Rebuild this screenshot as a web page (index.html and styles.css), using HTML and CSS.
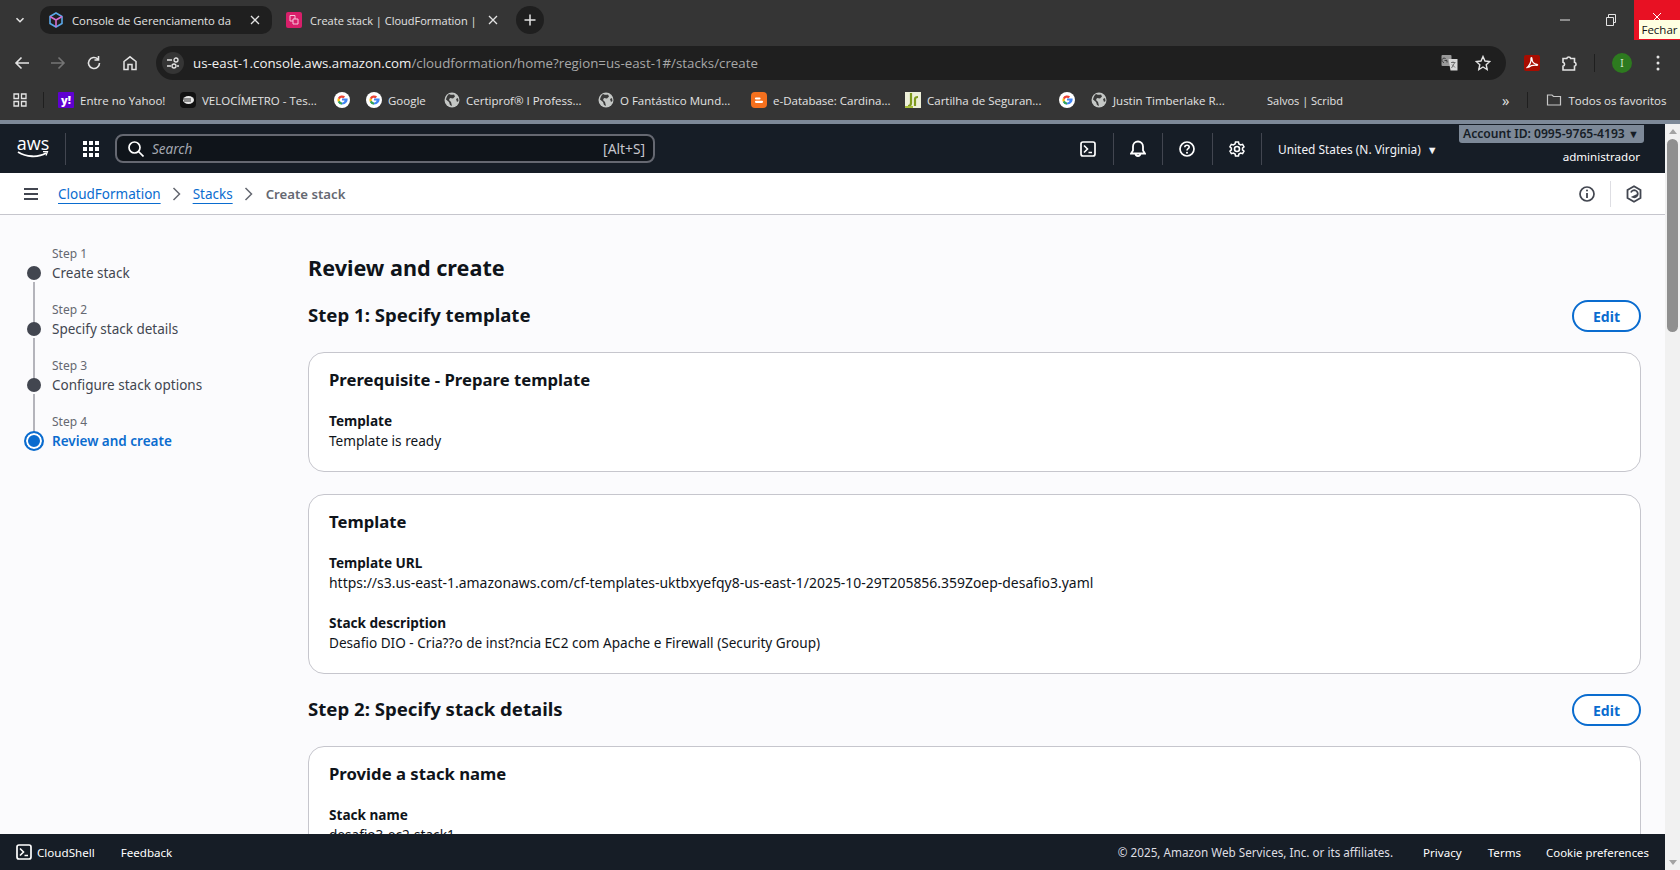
FILE: index.html
```html
<!DOCTYPE html>
<html lang="en">
<head>
  <meta charset="UTF-8">
  <title>Create stack | CloudFormation</title>
  <link rel="stylesheet" href="styles.css">
</head>
<body>
  <div class="tabstrip">
    <svg class="tab-list" width="12" height="12" viewBox="0 0 12 12"><path d="M2.500 4.200 6 7.700l3.500-3.500" fill="none" stroke="#e3e3e3" stroke-width="1.600"/></svg>
    <div class="tab tab-active">
      <svg width="16" height="16" viewBox="0 0 16 16"><path d="M8 1 14 4.500v7L8 15 2 11.500v-7z" fill="none" stroke="#5aa7e8" stroke-width="1.600"/><path d="M2 4.500 8 8l6-3.500M8 8v7" fill="none" stroke="#d56fd0" stroke-width="1.600"/></svg>
      <span class="tab-title">Console de Gerenciamento da</span>
      <svg class="tab-close" width="10" height="10" viewBox="0 0 10 10"><path d="M1 1l8 8M9 1 1 9" stroke="#e3e3e3" stroke-width="1.300"/></svg>
    </div>
    <div class="tab tab-second">
      <svg width="16" height="16" viewBox="0 0 16 16"><rect width="16" height="16" rx="2" fill="#d81f6a"/><path d="M4 3.500h5v3.500H7v2H4zM9 7h3v5H7V9" fill="none" stroke="#f6c6da" stroke-width="1"/></svg>
      <span class="tab-title">Create stack | CloudFormation |</span>
      <svg class="tab-close" width="10" height="10" viewBox="0 0 10 10"><path d="M1 1l8 8M9 1 1 9" stroke="#e3e3e3" stroke-width="1.300"/></svg>
    </div>
    <div class="new-tab"><svg width="12" height="12" viewBox="0 0 12 12"><path d="M6 .5v11M.5 6h11" stroke="#e3e3e3" stroke-width="1.500"/></svg></div>
    <div class="window-controls">
      <svg class="win-min" width="10" height="10" viewBox="0 0 10 10"><path d="M0 5h10" stroke="#e3e3e3"/></svg>
      <svg class="win-restore" width="12" height="12" viewBox="0 0 12 12"><path d="M1.500 3.500h7v8h-7zM3.500 3.500v-3h7v8h-2" fill="none" stroke="#e3e3e3"/></svg>
      <div class="close-btn"><svg width="10" height="10" viewBox="0 0 10 10"><path d="M1 1l8 8M9 1 1 9" stroke="#fff"/></svg></div>
    </div>
    <div class="tooltip">Fechar</div>
  </div>

  <div class="toolbar">
    <svg class="nav-icon" width="16" height="16" viewBox="0 0 16 16"><path d="M15 8H2M7.500 2.500 2 8l5.500 5.500" fill="none" stroke="#e3e3e3" stroke-width="1.600"/></svg>
    <svg class="nav-icon" width="16" height="16" viewBox="0 0 16 16"><path d="M1 8h13M8.500 2.500 14 8l-5.500 5.500" fill="none" stroke="#757575" stroke-width="1.600"/></svg>
    <svg class="nav-icon" width="16" height="16" viewBox="0 0 16 16"><path d="M13.500 8A5.500 5.500 0 1 1 11.800 4M12.500 1v4h-4" fill="none" stroke="#e3e3e3" stroke-width="1.600"/></svg>
    <svg class="nav-icon" width="16" height="16" viewBox="0 0 16 16"><path d="M2 14.500V6.500L8 1.800l6 4.700v8h-4V9.500H6v5z" fill="none" stroke="#e3e3e3" stroke-width="1.500"/></svg>
    <div class="omnibox">
      <div class="site-info"><svg width="14" height="14" viewBox="0 0 14 14"><path d="M1 4h5M11 10h2M1 10h4" stroke="#e3e3e3" stroke-width="1.300"/><circle cx="10" cy="4" r="2" fill="none" stroke="#e3e3e3" stroke-width="1.300"/><circle cx="8" cy="10" r="2" fill="none" stroke="#e3e3e3" stroke-width="1.300"/></svg></div>
      <div class="url"><span class="url-host">us-east-1.console.aws.amazon.com</span>/cloudformation/home?region=us-east-1#/stacks/create</div>
      <svg width="18" height="18" viewBox="0 0 18 18"><rect x="0.500" y="1" width="10" height="11" rx="1" fill="#9a9a9a"/><path d="M7.500 5h9v11.500h-7z" fill="#d8d8d8"/><path d="M3 8.500a2.200 2.200 0 1 1 2-3.300M3.500 6.500h2.500v2" fill="none" stroke="#333" stroke-width=".9"/><path d="M10 8.500h4.500M12 7.500v1M10.500 14l3-5M11 10.500l3 3" stroke="#555" fill="none" stroke-width=".8"/></svg>
      <svg class="star" width="16" height="16" viewBox="0 0 16 16"><path d="M8 1.500 10 6l4.800.5-3.600 3.200 1 4.800L8 12l-4.200 2.500 1-4.800L1.200 6.500 6 6z" fill="none" stroke="#e3e3e3" stroke-width="1.400"/></svg>
    </div>
    <div class="ext-pdf"><svg width="14" height="14" viewBox="0 0 14 14"><path d="M1.500 12C4.500 10 6.500 5.500 6 2.500c-.2-1 .8-1 .9 0C7 5.500 9 8 12 8.500c1 .2.700.9-.3.800-3-.3-6 .2-8.500 2.200" fill="none" stroke="#fff" stroke-width="1.300"/></svg></div>
    <svg class="ext-puzzle" width="18" height="18" viewBox="0 0 18 18"><path d="M2 4.500h3.800a2 2 0 0 1 3.900 0h3.800v3.800a2 2 0 0 1 0 3.900v3.800H2v-3.800a2 2 0 0 0 0-3.900z" fill="none" stroke="#e3e3e3" stroke-width="1.600"/></svg>
    <div class="tool-sep"></div>
    <div class="avatar">I</div>
    <svg class="menu-dots" width="4" height="16" viewBox="0 0 4 16"><circle cx="2" cy="2" r="1.500" fill="#e3e3e3"/><circle cx="2" cy="8" r="1.500" fill="#e3e3e3"/><circle cx="2" cy="14" r="1.500" fill="#e3e3e3"/></svg>
  </div>

  <div class="bookmarks">
    <svg class="apps" width="14" height="14" viewBox="0 0 14 14"><path d="M1 1h4.500v4.500H1zM8.500 1H13v4.500H8.500zM1 8.500h4.500V13H1zM8.500 8.500H13V13H8.500z" fill="none" stroke="#e3e3e3" stroke-width="1.300"/></svg>
    <div class="bm-sep"></div>
    <div class="bm bm-yahoo"><span class="fav fav-yahoo">y!</span>Entre no Yahoo!</div>
    <div class="bm bm-velo"><svg class="fav-svg" viewBox="0 0 16 16"><rect width="16" height="16" rx="4" fill="#111"/><ellipse cx="8.500" cy="8" rx="5.500" ry="4" fill="#e8e8e8"/><path d="M3 7h8M4 9h7" stroke="#333"/></svg>VELOCÍMETRO - Tes...</div>
    <div class="bm bm-g1"><svg class="fav-svg" viewBox="0 0 16 16"><use href="#g-logo"/></svg></div>
    <div class="bm bm-google"><svg class="fav-svg" viewBox="0 0 16 16"><use href="#g-logo"/></svg>Google</div>
    <div class="bm bm-cert"><svg class="fav-svg" viewBox="0 0 16 16"><use href="#globe"/></svg>Certiprof® I Profess...</div>
    <div class="bm bm-fant"><svg class="fav-svg" viewBox="0 0 16 16"><use href="#globe"/></svg>O Fantástico Mund...</div>
    <div class="bm bm-blog"><svg class="fav-svg" viewBox="0 0 16 16"><rect width="16" height="16" rx="4" fill="#f4701e"/><path d="M5 6.500h3.500M5 9.800h6" stroke="#fff" stroke-width="2.200" stroke-linecap="round"/></svg>e-Database: Cardina...</div>
    <div class="bm bm-cart"><svg class="fav-svg" viewBox="0 0 16 16"><rect width="16" height="16" fill="#eef0d8"/><path d="M6 1v10c0 2-1 3-3 3M10 14V7c0-1 1-2 3-2" fill="none" stroke="#7f9a1e" stroke-width="2.200"/><path d="M0 15h8" stroke="#a8bd3a" stroke-width="2"/></svg>Cartilha de Seguran...</div>
    <div class="bm bm-g2"><svg class="fav-svg" viewBox="0 0 16 16"><use href="#g-logo"/></svg></div>
    <div class="bm bm-just"><svg class="fav-svg" viewBox="0 0 16 16"><use href="#globe"/></svg>Justin Timberlake R...</div>
    <div class="bm bm-salvos">Salvos | Scribd</div>
    <div class="bm-more">»</div>
    <div class="bm-sep bm-sep-right"></div>
    <div class="bm bm-all"><svg class="fav-svg" viewBox="0 0 16 16"><path d="M1.500 3h4.500l1.500 1.500h7V13h-13z" fill="none" stroke="#c7c7c7" stroke-width="1.200"/></svg>Todos os favoritos</div>
  </div>
  <div class="chrome-edge"></div>

  <svg class="defs" width="0" height="0">
    <defs>
      <g id="g-logo">
        <circle cx="8" cy="8" r="8" fill="#fff"/>
        <path d="M8 6.600h5.600c.3 2.900-1.500 6-5.600 6a4.600 4.600 0 0 1-4.100-2.500l1.900-1.300c.4 1 1.200 1.800 2.200 1.800 1.200 0 2.300-.6 2.600-2H8z" fill="#4285f4"/>
        <path d="M3.900 10.100a4.600 4.600 0 0 1 0-4.200l1.900 1.300a2.400 2.400 0 0 0 0 1.600z" fill="#fbbc05"/>
        <path d="M3.900 5.900A4.600 4.600 0 0 1 11.100 4.600L9.500 6.200A2.400 2.400 0 0 0 5.800 7.200z" fill="#ea4335"/>
        <path d="M3.900 10.100 5.800 8.800c.4 1 1.200 1.800 2.200 1.800v2a4.600 4.600 0 0 1-4.100-2.500z" fill="#34a853"/>
      </g>
      <g id="globe">
        <circle cx="8" cy="8" r="7.500" fill="#c4c7c5"/>
        <path d="M5 2c2 1 4 1 5 .5l1 2-2 2-3-.5-1 2 2 2 1 4-2-1-1-3-3-2.500C2.500 5 3.500 3 5 2zM14 6l-2 1 1 3 1.500-1z" fill="#3a3a3a"/>
      </g>
    </defs>
  </svg>

  <div class="viewport">
    <div class="console">
      <header class="top-nav">
        <div class="aws-logo">
          <span class="aws-text">aws</span>
          <svg width="32" height="8" viewBox="0 0 32 8"><path d="M1 1c8 5 20 6 28 1" fill="none" stroke="#fff" stroke-width="1.800"/><path d="M26 .5h4.500L29 4.500" fill="none" stroke="#fff" stroke-width="1.300"/></svg>
        </div>
        <div class="nav-sep-logo"></div>
        <svg class="services" width="16" height="16" viewBox="0 0 16 16" fill="#fff"><rect width="4" height="4"/><rect x="6" width="4" height="4"/><rect x="12" width="4" height="4"/><rect y="6" width="4" height="4"/><rect x="6" y="6" width="4" height="4"/><rect x="12" y="6" width="4" height="4"/><rect y="12" width="4" height="4"/><rect x="6" y="12" width="4" height="4"/><rect x="12" y="12" width="4" height="4"/></svg>
        <div class="search">
          <svg width="16" height="16" viewBox="0 0 16 16"><circle cx="6.500" cy="6.500" r="5.500" fill="none" stroke="#fff" stroke-width="1.700"/><path d="m10.500 10.500 5 5" stroke="#fff" stroke-width="1.700"/></svg>
          <span class="search-hint">Search</span>
          <span class="search-key">[Alt+S]</span>
        </div>
        <div class="nav-icons">
          <div class="nav-btn"><svg width="16" height="16" viewBox="0 0 16 16"><use href="#shell"/></svg></div>
          <div class="nav-btn"><svg width="16" height="18" viewBox="0 0 16 18"><path d="M1 13.500h14l-2-3V6.500a5 5 0 0 0-10 0v4zM5.500 13.500a2.500 2.500 0 0 0 5 0" fill="none" stroke="#fff" stroke-width="1.800"/></svg></div>
          <div class="nav-btn"><svg width="16" height="16" viewBox="0 0 16 16"><circle cx="8" cy="8" r="7" fill="none" stroke="#fff" stroke-width="1.700"/><path d="M5.800 6.200C5.800 4.900 6.800 4.200 8 4.200s2.200.8 2.200 1.900C10.200 7.700 8 7.700 8 9.500" fill="none" stroke="#fff" stroke-width="1.600"/><circle cx="8" cy="11.800" r="1" fill="#fff"/></svg></div>
          <div class="nav-btn"><svg width="16" height="16" viewBox="0 0 16 16"><circle cx="8" cy="8" r="2.500" fill="none" stroke="#fff" stroke-width="1.600"/><path d="M6.500 1h3l.4 2 1.700 1 2-.7 1.400 2.600-1.500 1.300v1.600l1.500 1.300-1.400 2.600-2-.7-1.700 1-.4 2h-3l-.4-2-1.700-1-2 .7L.9 10.100l1.500-1.300V7.200L.9 5.900l1.400-2.600 2 .7 1.700-1z" fill="none" stroke="#fff" stroke-width="1.500"/></svg></div>
        </div>
        <div class="region">United States (N. Virginia)<span class="caret">▼</span></div>
        <div class="account">
          <div class="account-badge">Account ID: 0995-9765-4193 <span class="caret-sm">▼</span></div>
          <div class="account-user">administrador</div>
        </div>
      </header>

      <div class="breadcrumbs">
        <svg class="hamburger" width="16" height="14" viewBox="0 0 16 14"><path d="M1 2h14M1 7h14M1 12h14" stroke="#424650" stroke-width="2"/></svg>
        <a class="crumb-link">CloudFormation</a>
        <svg class="crumb-arrow" width="10" height="14" viewBox="0 0 10 14"><path d="m1.500 1 6 6-6 6" fill="none" stroke="#656871" stroke-width="1.500"/></svg>
        <a class="crumb-link">Stacks</a>
        <svg class="crumb-arrow" width="10" height="14" viewBox="0 0 10 14"><path d="m1.500 1 6 6-6 6" fill="none" stroke="#656871" stroke-width="1.500"/></svg>
        <span class="crumb-current">Create stack</span>
        <div class="crumb-tools">
          <svg width="16" height="16" viewBox="0 0 16 16"><circle cx="8" cy="8" r="7" fill="none" stroke="#424650" stroke-width="1.700"/><path d="M8 7v5" stroke="#424650" stroke-width="1.800"/><circle cx="8" cy="4.500" r="1" fill="#424650"/></svg>
          <div class="tools-sep"></div>
          <svg width="16" height="18" viewBox="0 0 16 18"><path d="M8 1.200 14.500 5v8L8 16.800 1.500 13V5z" fill="none" stroke="#424650" stroke-width="1.800"/><path d="M5 7.500A3.500 3.500 0 1 1 7 12l4-2" fill="none" stroke="#424650" stroke-width="1.800"/></svg>
        </div>
      </div>

      <div class="page">
        <nav class="steps">
          <div class="step">
            <div class="step-label">Step 1</div>
            <div class="step-row"><span class="step-dot"></span><span class="step-name">Create stack</span></div>
          </div>
          <div class="step">
            <div class="step-label">Step 2</div>
            <div class="step-row"><span class="step-dot"></span><span class="step-name">Specify stack details</span></div>
          </div>
          <div class="step">
            <div class="step-label">Step 3</div>
            <div class="step-row"><span class="step-dot"></span><span class="step-name">Configure stack options</span></div>
          </div>
          <div class="step step-current">
            <div class="step-label">Step 4</div>
            <div class="step-row"><span class="step-dot"></span><span class="step-name">Review and create</span></div>
          </div>
        </nav>

        <main class="content">
          <h1 class="page-title">Review and create</h1>

          <div class="section-head">
            <h2>Step 1: Specify template</h2>
            <button class="edit-btn">Edit</button>
          </div>
          <section class="card">
            <h3>Prerequisite - Prepare template</h3>
            <div class="field">
              <div class="field-label">Template</div>
              <div class="field-value">Template is ready</div>
            </div>
          </section>
          <section class="card">
            <h3>Template</h3>
            <div class="field">
              <div class="field-label">Template URL</div>
              <div class="field-value field-url">https://s3.us-east-1.amazonaws.com/cf-templates-uktbxyefqy8-us-east-1/2025-10-29T205856.359Zoep-desafio3.yaml</div>
            </div>
            <div class="field">
              <div class="field-label">Stack description</div>
              <div class="field-value">Desafio DIO - Cria??o de inst?ncia EC2 com Apache e Firewall (Security Group)</div>
            </div>
          </section>

          <div class="section-head">
            <h2>Step 2: Specify stack details</h2>
            <button class="edit-btn">Edit</button>
          </div>
          <section class="card">
            <h3>Provide a stack name</h3>
            <div class="field">
              <div class="field-label">Stack name</div>
              <div class="field-value">desafio3-ec2-stack1</div>
            </div>
          </section>
        </main>
      </div>

      <footer class="bottom-bar">
        <svg width="16" height="16" viewBox="0 0 16 16"><use href="#shell"/></svg>
        <span class="cloudshell">CloudShell</span>
        <span class="feedback">Feedback</span>
        <span class="copyright">© 2025, Amazon Web Services, Inc. or its affiliates.</span>
        <span class="foot-link">Privacy</span>
        <span class="foot-link">Terms</span>
        <span class="foot-link foot-cookie">Cookie preferences</span>
      </footer>
    </div>
    <div class="scrollbar">
      <div class="scroll-up"></div>
      <div class="scroll-thumb"></div>
      <div class="scroll-track"></div>
      <div class="scroll-down"></div>
    </div>
  </div>

  <svg class="defs" width="0" height="0">
    <defs>
      <g id="shell">
        <rect x="1" y="1" width="14" height="14" rx="2" fill="none" stroke="#fff" stroke-width="1.700"/>
        <path d="m4 4.500 3.500 3.500L4 11.500M8.500 11.500H12" fill="none" stroke="#fff" stroke-width="1.600"/>
      </g>
    </defs>
  </svg>
</body>
</html>
```

FILE: styles.css
```css
* {
  box-sizing: border-box;
}

body {
  margin: 0;
  width: 1680px;
  height: 870px;
  overflow: hidden;
  display: flex;
  flex-direction: column;
  background: #353535;
  font-family: "Noto Sans", sans-serif;
  font-size: 14px;
  color: #0f141a;
}

.defs {
  position: absolute;
}

/* browser chrome */
.tabstrip {
  height: 40px;
  flex: none;
  display: flex;
  align-items: flex-start;
  padding-top: 6px;
  position: relative;
  color: #e3e3e3;
  font-size: 11.300px;
  font-family: "Open Sans", sans-serif;
}

.tab-list {
  margin: 8px 14px 0 14px;
}

.tab {
  height: 28px;
  width: 232px;
  flex: none;
  display: flex;
  align-items: center;
  padding: 0 10px 0 8px;
  border-radius: 10px;
  gap: 8px;
}

.tab-active {
  background: #1f1f1f;
  margin-right: 6px;
}

.tab-second {
  font-size: 11px;
}

.tab-title {
  flex: 1;
  white-space: nowrap;
  overflow: hidden;
  min-width: 0;
}

.tab-close {
  margin: 0 2px 0 2px;
}

.new-tab {
  width: 28px;
  height: 28px;
  margin-left: 6px;
  border-radius: 50%;
  background: #1f1f1f;
  display: flex;
  align-items: center;
  justify-content: center;
}

.window-controls {
  margin-left: auto;
  display: flex;
  align-items: center;
  height: 40px;
  margin-top: -6px;
}

.win-restore {
  margin-left: 35px;
  margin-right: 17px;
}

.close-btn {
  width: 46px;
  height: 40px;
  background: #e81123;
  display: flex;
  justify-content: center;
  padding-top: 12px;
}

.tooltip {
  position: absolute;
  right: 0;
  top: 20px;
  width: 41px;
  height: 19px;
  background: #ffffe1;
  color: #111;
  font-size: 11.500px;
  line-height: 19px;
  text-align: center;
  white-space: nowrap;
}

.toolbar {
  height: 44px;
  flex: none;
  display: flex;
  align-items: center;
  padding: 2px 14px 0 14px;
}

.nav-icon {
  margin-right: 20px;
}

.nav-icon:nth-child(4) {
  margin-right: 18px;
}

.omnibox {
  width: 1350px;
  height: 34px;
  background: #1f1f1f;
  border-radius: 17px;
  display: flex;
  align-items: center;
  padding: 0 15px 0 6px;
  color: #a8a8a8;
}

.site-info {
  width: 22px;
  height: 22px;
  border-radius: 50%;
  background: #353535;
  display: flex;
  align-items: center;
  justify-content: center;
  margin-right: 9px;
}

.url {
  flex: 1;
  font-family: "Open Sans", sans-serif;
  font-size: 13.300px;
}

.url-host {
  color: #f1f1f1;
}

.star {
  margin-left: 16px;
}

.ext-pdf {
  width: 16px;
  height: 16px;
  margin-left: 18px;
  background: #a80c00;
  border-radius: 2px;
  display: flex;
  align-items: center;
  justify-content: center;
}

.ext-puzzle {
  margin-left: 21px;
}

.tool-sep {
  width: 1px;
  height: 18px;
  background: #1f1f1f;
  margin-left: 15px;
}

.avatar {
  width: 20px;
  height: 20px;
  margin-left: 17px;
  border-radius: 50%;
  background: #2d7a1f;
  color: #d5e8cf;
  font-size: 10px;
  text-align: center;
  line-height: 20px;
}

.menu-dots {
  margin-left: 24px;
}

.bookmarks {
  height: 36px;
  flex: none;
  display: flex;
  align-items: center;
  padding: 0 0 4px 13px;
  font-family: "Open Sans", sans-serif;
  font-size: 11.500px;
  color: #e3e3e3;
  white-space: nowrap;
}

.bm-sep {
  width: 1px;
  height: 16px;
  background: #1f1f1f;
  margin: 0 14px 0 16px;
}

.bm {
  display: flex;
  align-items: center;
  gap: 6px;
  flex: none;
}

.bm-yahoo { width: 122px; }
.bm-velo { width: 154px; }
.bm-g1 { width: 32px; }
.bm-google { width: 78px; }
.bm-cert { width: 154px; }
.bm-fant { width: 153px; }
.bm-blog { width: 154px; }
.bm-cart { width: 154px; }
.bm-g2 { width: 32px; }
.bm-just { width: 176px; }
.bm-salvos { width: 235px; font-size: 11px; }
.bm-more { font-size: 15px; }

.bm-sep-right {
  margin: 0 18px 0 18px;
}

.fav,
.fav-svg {
  width: 16px;
  height: 16px;
  flex: none;
  display: block;
}

.fav {
  border-radius: 1px;
  text-align: center;
  font-weight: 800;
  line-height: 15px;
  font-size: 11px;
  color: #fff;
}

.fav-yahoo { background: #5f01d1; }

.chrome-edge {
  height: 4px;
  flex: none;
  background: #7d8998;
}

.viewport {
  flex: 1;
  min-height: 0;
  display: flex;
}

.console {
  flex: 1;
  min-width: 0;
  display: flex;
  flex-direction: column;
  background: #fbfbfd;
}

/* aws top nav */
.top-nav {
  height: 49px;
  flex: none;
  display: flex;
  align-items: center;
  position: relative;
  padding-left: 17px;
  background: #161d26;
  color: #fff;
}

.aws-logo {
  width: 32px;
  display: flex;
  flex-direction: column;
  align-items: center;
}

.aws-text {
  font-family: "Open Sans", sans-serif;
  font-size: 18px;
  line-height: 16px;
  margin-top: -3px;
}

.nav-sep-logo {
  width: 1px;
  height: 32px;
  background: #424650;
  margin: 0 17px 0 16px;
}

.search {
  width: 540px;
  height: 29px;
  margin-left: 16px;
  display: flex;
  align-items: center;
  gap: 8px;
  padding: 0 8px 0 11px;
  background: #0f141a;
  border: 2px solid #656871;
  border-radius: 8px;
}

.search-hint {
  font-style: italic;
  font-size: 13.500px;
  color: #a3a7b0;
}

.search-key {
  margin-left: auto;
  color: #c6c6cd;
  font-size: 13.800px;
}

.nav-icons {
  display: flex;
  margin-left: 409px;
}

.nav-btn {
  width: 49.500px;
  height: 32px;
  display: flex;
  align-items: center;
  justify-content: center;
  border-right: 1px solid #424650;
}

.region {
  margin-left: 16px;
  font-size: 11.900px;
  color: #f3f3f7;
}

.caret {
  font-size: 11px;
  margin-left: 6px;
}

.account {
  position: absolute;
  right: 21px;
  top: 1px;
  display: flex;
  flex-direction: column;
  align-items: flex-end;
}

.account-badge {
  width: 185px;
  height: 18px;
  background: #7d8998;
  color: #161d26;
  font-weight: 600;
  font-size: 12.100px;
  line-height: 18px;
  padding-left: 4px;
  border-radius: 0 0 3px 3px;
  white-space: nowrap;
}

.caret-sm {
  font-size: 11px;
}

.account-user {
  margin: 6px 4px 0 0;
  font-size: 11.600px;
}

/* breadcrumbs */
.breadcrumbs {
  height: 42px;
  flex: none;
  display: flex;
  align-items: center;
  padding-left: 23px;
  background: #fff;
  border-bottom: 1px solid #c6c6cd;
  font-size: 13.500px;
}

.hamburger {
  margin-right: 19px;
}

.crumb-link {
  color: #0a6ccf;
  text-decoration: underline;
  text-underline-offset: 4px;
}

.crumb-arrow {
  margin: 0 11px;
}

.crumb-arrow:nth-of-type(3) {
  margin-right: 12px;
}

.crumb-current {
  font-weight: 600;
  font-size: 13.200px;
  color: #656871;
}

.crumb-tools {
  margin-left: auto;
  display: flex;
  align-items: center;
  padding-right: 23px;
}

.tools-sep {
  width: 1px;
  height: 26px;
  background: #dedee3;
  margin: 0 15px;
}

/* wizard */
.page {
  flex: 1;
  min-height: 0;
  overflow: hidden;
  display: flex;
}

.steps {
  width: 308px;
  flex: none;
  padding: 30px 0 0 24px;
}

.step {
  height: 56px;
  position: relative;
}

.step-label {
  padding-left: 28px;
  font-size: 12px;
  line-height: 17px;
  margin-bottom: 1px;
  color: #656871;
}

.step-row {
  display: flex;
  align-items: center;
  height: 20px;
  font-size: 13.500px;
}

.step-dot {
  width: 14px;
  height: 14px;
  margin: 0 11px 0 3px;
  border-radius: 50%;
  background: #424650;
  flex: none;
}

.step-name {
  color: #424650;
}

.step:not(:last-child)::after {
  content: "";
  position: absolute;
  left: 9px;
  top: 37px;
  width: 1.500px;
  height: 42px;
  background: #b4b4bb;
}

.step-current .step-name {
  color: #0a6ccf;
  font-weight: 600;
}

.step-current .step-dot {
  width: 20px;
  height: 20px;
  margin: 0 8px 0 0;
  background: #0a6ccf;
  border: 2px solid #0a6ccf;
  box-shadow: inset 0 0 0 2px #fff;
}

.content {
  flex: 1;
  min-width: 0;
  padding: 38px 24px 0 0;
}

.page-title {
  margin: 0 0 17px;
  font-size: 21.600px;
  line-height: 30px;
  font-weight: 700;
}

.section-head {
  display: flex;
  align-items: center;
  justify-content: space-between;
  height: 32px;
  margin-bottom: 20px;
}

.section-head h2 {
  margin: 0;
  padding-bottom: 2px;
  font-size: 18.600px;
  line-height: 24px;
  font-weight: 700;
}

.edit-btn {
  width: 69px;
  height: 32px;
  background: #fff;
  border: 2px solid #0a6ccf;
  border-radius: 16px;
  color: #0a6ccf;
  font: 700 14px "Noto Sans", sans-serif;
}

.card {
  margin-bottom: 20px;
  padding: 16px 20px 20px;
  background: #fff;
  border: 1px solid #c6c6cd;
  border-radius: 16px;
}

.card + .card {
  margin-top: 22px;
}

.card h3 {
  margin: 0 0 20px;
  font-size: 16.700px;
  line-height: 22px;
  font-weight: 700;
}

.field {
  line-height: 20px;
  margin-top: 20px;
  font-size: 13.600px;
}

.card h3 + .field {
  margin-top: 0;
}

.field-label {
  font-weight: 700;
}

.field-url {
  font-size: 13.950px;
}

/* footer */
.bottom-bar {
  height: 36px;
  flex: none;
  display: flex;
  align-items: center;
  padding: 0 16px;
  position: relative;
  background: #161d26;
  color: #fff;
  font-size: 11.600px;
}

.cloudshell {
  margin-left: 5px;
}

.feedback {
  margin-left: 26px;
}

.copyright {
  margin-left: auto;
  margin-right: 4px;
  font-size: 11.700px;
  color: #dedee3;
}

.foot-link {
  margin-left: 26px;
}

.foot-cookie {
  margin-left: 25px;
  font-size: 11.400px;
}

/* scrollbar */
.scrollbar {
  width: 15px;
  flex: none;
  display: flex;
  flex-direction: column;
  background: #f1f1f1;
}

.scroll-up,
.scroll-down {
  height: 15px;
  display: flex;
  justify-content: center;
}

.scroll-up::before,
.scroll-down::before {
  content: "";
  width: 0;
  height: 0;
  margin-top: 5px;
  border-left: 4px solid transparent;
  border-right: 4px solid transparent;
}

.scroll-up::before {
  border-bottom: 5px solid #a3a3a3;
}

.scroll-down::before {
  border-top: 5px solid #a3a3a3;
}

.scroll-thumb {
  height: 193px;
  margin: 0 2px;
  background: #8f8f8f;
  border-radius: 7px;
}

.scroll-track {
  flex: 1;
}
```
